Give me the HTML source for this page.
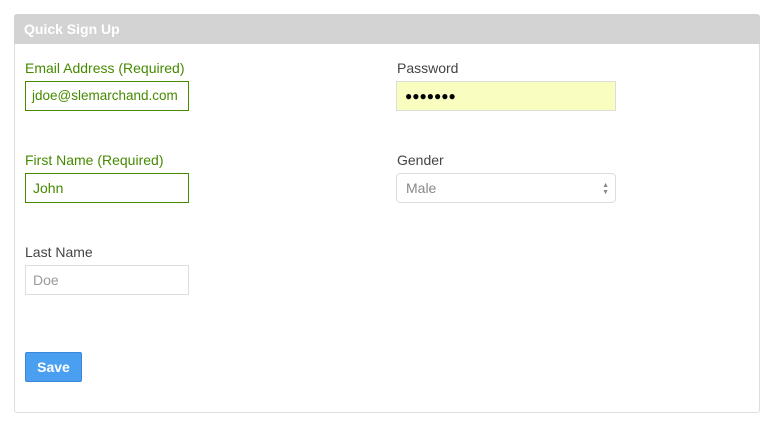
<!DOCTYPE html>
<html><head><style>
body{margin:0;background:#fff;font-family:"Liberation Sans",Arial,sans-serif;font-size:14px;color:#444}
.p{position:absolute;left:14px;top:14px;width:744px;height:397px;border:1px solid #ddd;border-radius:3px;}
.h{position:absolute;left:14px;top:14px;width:746px;height:30px;background:#d3d3d3;border-radius:3px 3px 0 0;color:#fff;font-weight:bold;font-size:14px;line-height:30px;}
.h span{padding-left:10px}
.l{position:absolute;font-size:14px;}
.g{color:#468a00}
.i{position:absolute;box-sizing:border-box;height:30px;border:1px solid #ddd;line-height:28px;padding-left:7px;font-size:14px}
.ig{border-color:#468a00;color:#468a00}
</style></head><body>
<div class="p"></div>
<div class="h"><span>Quick Sign Up</span></div>
<div class="l g" style="left:25px;top:60px">Email Address (Required)</div>
<div class="i ig" style="left:25px;top:81px;width:164px;font-size:13.5px;padding-left:6px">jdoe@slemarchand.com</div>
<div class="l" style="left:397px;top:60px">Password</div>
<div class="i" style="left:396px;top:81px;width:220px;background:#fafdc0;color:#000;font-size:12px;padding-left:8px">●●●●●●●</div>
<div class="l g" style="left:25px;top:152px">First Name (Required)</div>
<div class="i ig" style="left:25px;top:173px;width:164px">John</div>
<div class="l" style="left:397px;top:152px">Gender</div>
<div class="i" style="left:396px;top:173px;width:220px;border-radius:4px;color:#888;padding-left:9px">Male<span style="position:absolute;right:6px;font-size:7px;line-height:7px;top:8px;color:#888">▲<br>▼</span></div>
<div class="l" style="left:25px;top:244px">Last Name</div>
<div class="i" style="left:25px;top:265px;width:164px;color:#999">Doe</div>
<div style="position:absolute;left:25px;top:352px;width:57px;height:30px;box-sizing:border-box;background:#4a9ff0;border:1px solid #3a86d8;border-radius:2px;color:#fff;font-weight:bold;text-align:center;line-height:28px">Save</div>
</body></html>
